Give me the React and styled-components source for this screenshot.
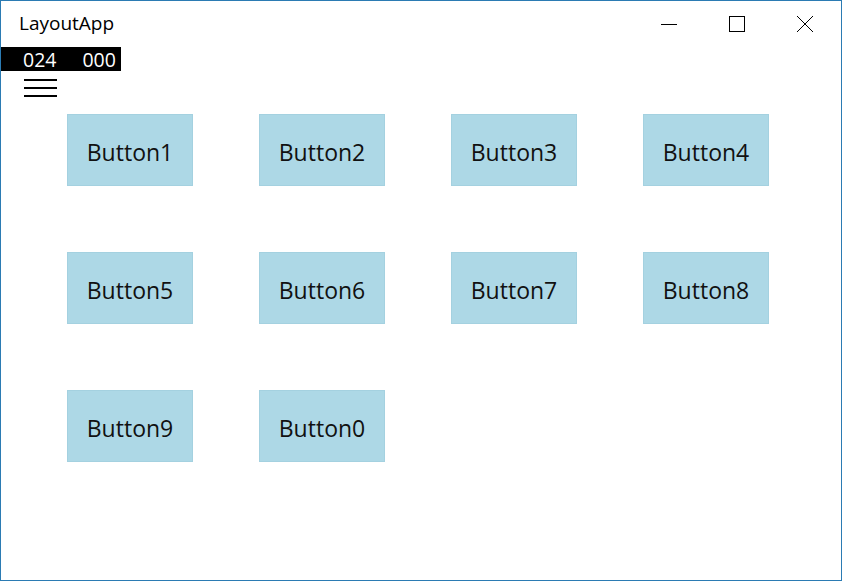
import React from 'react';
import styled, { createGlobalStyle } from 'styled-components';

const GlobalStyle = createGlobalStyle`
    html, body {
        margin: 0;
        padding: 0;
        background: #ffffff;
    }
    * {
        box-sizing: border-box;
    }
`;

const Window = styled.div`
    width: 842px;
    height: 581px;
    border: 1px solid #2b7bb3;
    background: #ffffff;
    display: flex;
    flex-direction: column;
    font-family: "Segoe UI", "Open Sans", "Noto Sans", sans-serif;
    overflow: hidden;
`;

const TitleBar = styled.header`
    height: 46px;
    display: flex;
    align-items: center;
    justify-content: space-between;
    padding-left: 18px;
    padding-right: 2px;
`;

const Title = styled.span`
    font-size: 19px;
    color: #000000;
    margin-top: -2px;
`;

const Controls = styled.div`
    display: flex;
    height: 100%;
`;

const ControlButton = styled.div`
    width: 68px;
    height: 100%;
    display: flex;
    align-items: center;
    justify-content: center;
    svg {
        display: block;
    }
`;

const Counter = styled.div`
    width: 120px;
    height: 24px;
    background: #000000;
    color: #ffffff;
    display: flex;
    align-items: center;
    font-size: 19.5px;
    padding-left: 22px;
    gap: 26px;
`;

const Hamburger = styled.div`
    margin: 8px 0 0 23px;
    width: 33px;
    display: flex;
    flex-direction: column;
    gap: 6px;
    span {
        display: block;
        height: 2px;
        background: #000000;
    }
`;

const ButtonGrid = styled.div`
    display: grid;
    grid-template-columns: repeat(4, 126px);
    grid-auto-rows: 72px;
    column-gap: 66px;
    row-gap: 66px;
    margin: 17px 0 0 66px;
`;

const Tile = styled.div`
    background: #add8e6;
    border: 1px solid #a4d1e0;
    display: flex;
    align-items: center;
    justify-content: center;
    font-size: 23px;
    color: #111111;
    padding-top: 3px;
`;

const buttons = ['Button1', 'Button2', 'Button3', 'Button4', 'Button5', 'Button6', 'Button7', 'Button8', 'Button9', 'Button0'];

const App = () => (
    <>
        <GlobalStyle />
        <Window>
            <TitleBar>
                <Title>LayoutApp</Title>
                <Controls>
                    <ControlButton>
                        <svg width="16" height="16" viewBox="0 0 16 16">
                            <line x1="0" y1="8.5" x2="16" y2="8.5" stroke="#000" strokeWidth="1" />
                        </svg>
                    </ControlButton>
                    <ControlButton>
                        <svg width="16" height="16" viewBox="0 0 16 16">
                            <rect x="0.5" y="0.5" width="15" height="15" fill="none" stroke="#000" strokeWidth="1" />
                        </svg>
                    </ControlButton>
                    <ControlButton>
                        <svg width="16" height="16" viewBox="0 0 16 16">
                            <path d="M0 0 L16 16 M16 0 L0 16" stroke="#000" strokeWidth="1" />
                        </svg>
                    </ControlButton>
                </Controls>
            </TitleBar>
            <Counter>
                <span>024</span>
                <span>000</span>
            </Counter>
            <Hamburger>
                <span />
                <span />
                <span />
            </Hamburger>
            <ButtonGrid>
                {buttons.map(label => (
                    <Tile key={label}>{label}</Tile>
                ))}
            </ButtonGrid>
        </Window>
    </>
);

export default App;
